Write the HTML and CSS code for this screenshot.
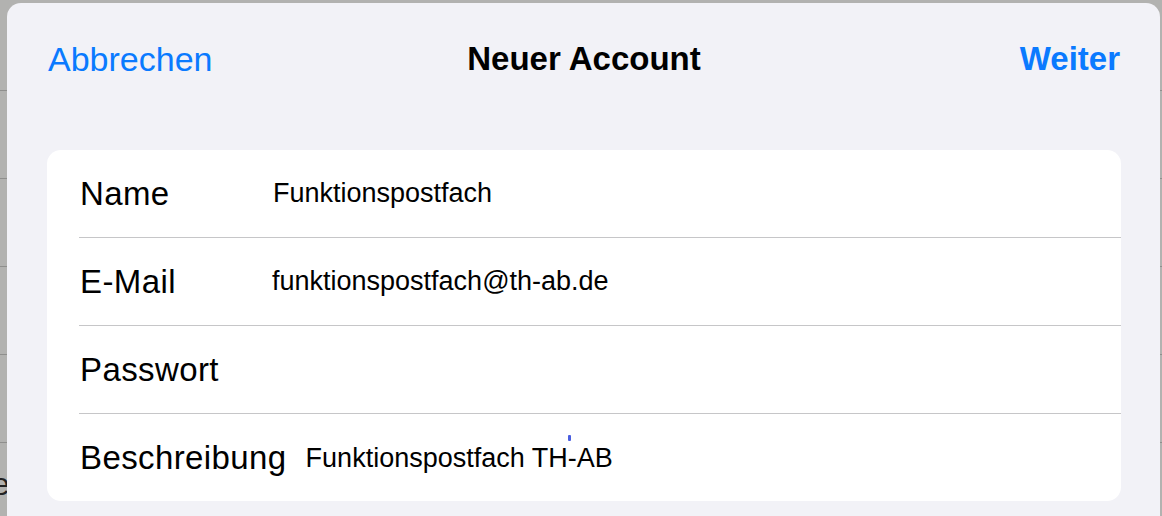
FILE: index.html
```html
<!DOCTYPE html>
<html lang="de">
<head>
<meta charset="utf-8">
<title>Neuer Account</title>
<link rel="stylesheet" href="styles.css">
</head>
<body>
<span class="bg-glyph">e</span>
<div class="modal">
  <header class="navbar">
    <span class="nav-btn nav-left">Abbrechen</span>
    <span class="nav-title">Neuer Account</span>
    <span class="nav-btn nav-right">Weiter</span>
  </header>
  <section class="card">
    <div class="row">
      <span class="label">Name</span>
      <span class="value">Funktionspostfach</span>
    </div>
    <div class="row">
      <span class="label">E-Mail</span>
      <span class="value value-mail">funktionspostfach@th-ab.de</span>
    </div>
    <div class="row">
      <span class="label">Passwort</span>
      <span class="value"></span>
    </div>
    <div class="row row-last">
      <span class="label">Beschreibung</span>
      <span class="value value-desc">Funktionspostfach TH<span class="caret"></span>-AB</span>
    </div>
  </section>
</div>
</body>
</html>
```
FILE: styles.css
```css
html, body {
  margin: 0;
  padding: 0;
  height: 516px;
  overflow: hidden;
}
body {
  position: relative;
  background-color: #b2b2b0;
  background-image:
    linear-gradient(#b2b2b0, #b2b2b0),
    repeating-linear-gradient(to bottom, transparent 0, transparent 87px, #8f8f8d 87px, #8f8f8d 88px);
  background-size: 100% 3px, 100% 100%;
  background-repeat: no-repeat;
  background-position: 0 0, 0 3px;
  font-family: "Liberation Sans", Arial, sans-serif;
  padding: 3px 2px 0 7px;
  box-sizing: border-box;
}
.bg-glyph {
  position: absolute;
  left: -8px;
  top: 466px;
  font-size: 32px;
  color: #222;
  font-family: "Liberation Sans", Arial, sans-serif;
}
.modal {
  position: relative;
  background: #f2f2f7;
  border-radius: 14px 14px 0 0;
  height: 560px;
}
.navbar {
  height: 112px;
  display: grid;
  grid-template-columns: 1fr auto 1fr;
  align-items: center;
  padding: 0 40px 0 41px;
  font-size: 33px;
}
.nav-btn {
  color: #0a7aff;
}
.nav-left {
  font-size: 34px;
  justify-self: start;
}
.nav-right {
  justify-self: end;
  font-weight: bold;
}
.nav-title {
  font-weight: bold;
  color: #000;
}
.card {
  margin: 35px 39px 0 40px;
  background: #fff;
  border-radius: 14px;
  overflow: hidden;
}
.row {
  position: relative;
  height: 87px;
  display: flex;
  align-items: center;
  padding-left: 33px;
  gap: 19px;
  border-bottom: 1px solid transparent;
}
.row::after {
  content: "";
  position: absolute;
  left: 32px;
  right: 0;
  bottom: -1px;
  height: 1px;
  background: #c6c6c8;
}
.row-last {
  border-bottom: none;
}
.row-last::after {
  display: none;
}
.label {
  min-width: 174px;
  font-size: 33px;
  letter-spacing: 0.4px;
  color: #000;
}
.value {
  font-size: 27px;
  color: #000;
  position: relative;
}
.value-mail {
  margin-left: -1px;
}
.value-desc {
  padding-top: 2px;
}
.caret {
  position: absolute;
  width: 3px;
  height: 6px;
  margin-left: 0;
  margin-top: -8px;
  background: #4a5ee0;
  border-radius: 1px;
}
```
